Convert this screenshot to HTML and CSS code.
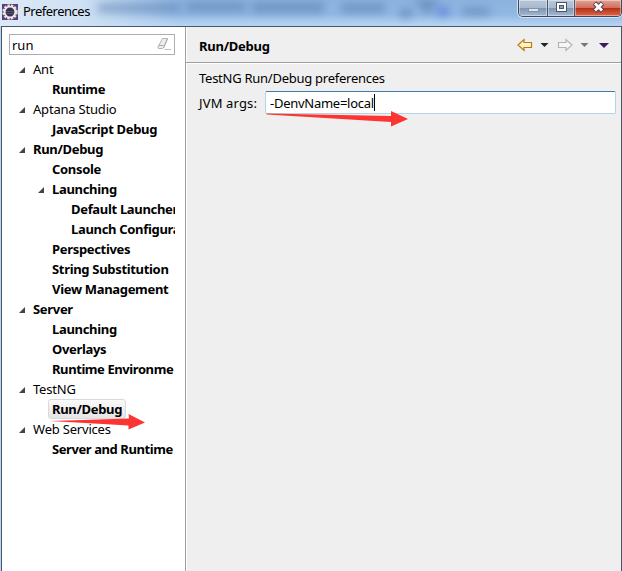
FILE: index.html
```html
<!DOCTYPE html>
<html lang="en">
<head>
<meta charset="utf-8">
<title>Preferences</title>
<link rel="stylesheet" href="styles.css">
</head>
<body>
<div class="window">
  <header class="titlebar">
    <svg class="backdrop" width="622" height="26" viewBox="0 0 622 26" aria-hidden="true">
      <g class="haze">
        <rect x="98" y="4" width="82" height="8"/>
        <rect x="186" y="3" width="60" height="8"/>
        <rect x="252" y="3" width="72" height="9"/>
        <rect x="341" y="4" width="44" height="8"/>
        <path d="M414 0h26l-13 15z"/>
        <rect x="400" y="9" width="12" height="9"/>
        <rect x="437" y="7" width="12" height="9" class="haze-blue"/>
        <rect x="462" y="8" width="28" height="7"/>
      </g>
    </svg>
    <svg class="app-icon" width="16" height="16" viewBox="0 0 16 16">
      <rect width="16" height="16" fill="#58407c"/>
      <circle cx="8" cy="8" r="6.7" fill="none" stroke="#e6e1dc" stroke-width="2" stroke-dasharray="2.4 1.2"/>
      <circle cx="8" cy="8" r="5.4" fill="#37304f" stroke="#eeeae4" stroke-width="1.9"/>
      <path d="M4 7.5h8M4.2 9.5h7.6" stroke="#5b5276"/>
    </svg>
    <h1 class="title">Preferences</h1>
    <div class="controls">
      <span class="control min"><svg width="28" height="15"><rect x="9.500" y="8.500" width="10" height="3" fill="#dce5ef" stroke="#8792a5"/></svg></span>
      <span class="control max"><svg width="26" height="15"><rect x="8.500" y="2.500" width="10" height="9" fill="#fff" stroke="#4c566b"/><rect x="11.500" y="5.500" width="4" height="3" fill="#8aa0bd" stroke="#4c566b"/></svg></span>
      <span class="control close"><svg width="46" height="15"><path d="M19.500 3L27.500 11M27.500 3L19.500 11" stroke="#5a3c4b" stroke-width="4.800"/><path d="M20 3.500L27 10.500M27 3.500L20 10.500" stroke="#fff" stroke-width="2.900"/></svg></span>
    </div>
  </header>
  <div class="content">
    <aside class="sidebar">
      <div class="filter">
        <span class="filter-text">run</span>
        <svg width="15" height="15" viewBox="0 0 15 15"><path d="M5.500 1.500h5l-4 9q-.5 1-1.500 1H2q-1.500 0-1-1.500z" fill="#eee" stroke="#b5b5b5"/><path d="M1.500 8.500h5M10.500 2l-4 9" stroke="#aaa" fill="none"/><path d="M7 12.500h7" stroke="#c5c5c5"/></svg>
      </div>
      <ul class="tree">
        <li class="row branch"><span class="label">Ant</span></li>
        <li class="row level-1 bold"><span class="label">Runtime</span></li>
        <li class="row branch"><span class="label">Aptana Studio</span></li>
        <li class="row level-1 bold"><span class="label">JavaScript Debug</span></li>
        <li class="row branch bold"><span class="label">Run/Debug</span></li>
        <li class="row level-1 bold"><span class="label">Console</span></li>
        <li class="row branch level-1 bold"><span class="label">Launching</span></li>
        <li class="row level-2 bold"><span class="label">Default Launcher</span></li>
        <li class="row level-2 bold"><span class="label">Launch Configurations</span></li>
        <li class="row level-1 bold"><span class="label">Perspectives</span></li>
        <li class="row level-1 bold"><span class="label">String Substitution</span></li>
        <li class="row level-1 bold"><span class="label">View Management</span></li>
        <li class="row branch bold"><span class="label">Server</span></li>
        <li class="row level-1 bold"><span class="label">Launching</span></li>
        <li class="row level-1 bold"><span class="label">Overlays</span></li>
        <li class="row level-1 bold tight"><span class="label">Runtime Environme</span></li>
        <li class="row branch"><span class="label">TestNG</span></li>
        <li class="row level-1 bold selected"><span class="label">Run/Debug</span></li>
        <li class="row branch"><span class="label">Web Services</span></li>
        <li class="row level-1 bold tight"><span class="label">Server and Runtime</span></li>
      </ul>
      <svg class="arrow tree-arrow" width="95" height="16" viewBox="0 0 95 16"><path d="M0 7L79 4.500L78.500 0L95 8.500L78.500 15.500V11.500z"/></svg>
    </aside>
    <main class="page">
      <div class="page-head">
        <h2 class="page-title">Run/Debug</h2>
        <svg class="nav" width="96" height="16" viewBox="0 0 96 16">
          <defs><linearGradient id="gold" x2="0" y2="1"><stop stop-color="#fffef0"/><stop offset="1" stop-color="#ffe79c"/></linearGradient></defs>
          <path d="M1 8L7 2.500V5.500H14.500V10.500H7V13.500z" fill="url(#gold)" stroke="#b77a16" stroke-width="1.200"/>
          <path d="M23.500 6h8l-4 4z" fill="#222"/>
          <path d="M55 8L49 2.500V5.500H41.500V10.500H49V13.500z" fill="#f6f6f6" stroke="#b4b4b4" stroke-width="1.200"/>
          <path d="M63.500 6h8l-4 4z" fill="#777"/>
          <path d="M82 6h10l-5 5z" fill="#3a1c66"/>
        </svg>
      </div>
      <div class="page-body">
        <p class="description">TestNG Run/Debug preferences</p>
        <div class="field">
          <span class="field-label">JVM args:</span>
          <div class="input"><span class="value">-DenvName=local</span><i class="caret"></i></div>
        </div>
        <svg class="arrow field-arrow" width="142" height="16" viewBox="0 0 142 16"><path d="M0 2.500L125 5V0L142 8L125 15.500V11L1 3.500z"/></svg>
      </div>
    </main>
  </div>
</div>
</body>
</html>
```
FILE: styles.css
```css
* { box-sizing: border-box; }
body {
  margin: 0;
  overflow: hidden;
  font: 13px/20px "Noto Sans", "Open Sans", sans-serif;
  color: #000;
}
h1, h2, p, ul { margin: 0; padding: 0; font-size: inherit; font-weight: normal; }
svg { display: block; flex: none; }
.window { width: 622px; height: 571px; display: flex; flex-direction: column; background: #bcd5ef; }
.titlebar {
  position: relative;
  height: 26px;
  flex: none;
  display: flex;
  align-items: flex-start;
  overflow: hidden;
  background: linear-gradient(90deg, #dce9f7 0, #cfe1f4 80px, rgba(190,215,241,0) 180px),
    linear-gradient(#8cb2de, #91b7e3 55%, #a8c9ec 80%, #b9d5f1);
}
.backdrop { position: absolute; left: 0; top: 0; }
.haze { fill: #41689b; opacity: .45; filter: blur(4.5px); }
.haze-blue { fill: #3158d8; }
.app-icon { position: relative; margin: 4px 0 0 2px; }
.title { position: relative; margin: 1px 0 0 5px; letter-spacing: -.5px; }
.controls {
  position: relative;
  display: flex;
  margin-left: auto;
  height: 17px;
  border: 1px solid #3d4861;
  border-top: 0;
  border-radius: 0 0 5px 5px;
  overflow: hidden;
  box-shadow: 0 0 0 1px #d2e3f5;
}
.control {
  border-right: 1px solid #4b5870;
  background: linear-gradient(#b9c7d9 0, #a7b8cf 50%, #7f94b0 51%, #a4b9d3 100%);
  box-shadow: inset 0 0 0 1px rgba(255,255,255,.4);
}
.min { width: 29px; }
.max { width: 27px; }
.close { width: 46px; border: 0; background: linear-gradient(#e3a394 0, #cf6e5b 50%, #b92d17 51%, #d96a49 100%); }
.content {
  flex: 1;
  display: flex;
  min-height: 0;
  margin-left: 1px;
  border: solid #46566f;
  border-width: 1px 1px 0;
}
.sidebar { position: relative; width: 183px; padding: 7px 0 0 7px; background: #fff; flex: none; }
.filter {
  width: 166px;
  height: 21px;
  border: 1px solid #abadb3;
  padding: 0 2px;
  display: flex;
  align-items: center;
  justify-content: space-between;
}
.tree { list-style: none; width: 166px; margin-top: 4px; overflow: hidden; }
.row { height: 20px; display: flex; align-items: center; padding-left: 24px; white-space: nowrap; letter-spacing: -.2px; }
.branch { padding-left: 10px; }
.branch::before {
  content: "";
  width: 6px;
  height: 6px;
  margin: 2px 8px 0 0;
  flex: none;
  background: #444;
  clip-path: polygon(100% 0, 100% 100%, 0 100%);
}
.level-1 { padding-left: 43px; }
.branch.level-1 { padding-left: 29px; }
.level-2 { padding-left: 62px; }
.bold { font-weight: bold; letter-spacing: -.32px; }
.tight { letter-spacing: -.42px; }
.selected { padding-left: 39px; }
.selected .label {
  height: 20px;
  line-height: 18px;
  padding: 0 3px;
  border: 1px solid #d9d9d9;
  border-radius: 3px;
  background: linear-gradient(#fafafa, #e5e5e5);
}
.arrow { position: absolute; fill: #fc3532; }
.tree-arrow { left: 48px; top: 387px; }
.page { flex: 1; min-width: 0; display: flex; flex-direction: column; border-left: 1px solid #a0a0a0; background: #efefef; box-shadow: inset 1px 0 #fff; }
.page-head {
  height: 36px;
  display: flex;
  align-items: center;
  padding: 1px 8px 0 13px;
  border-bottom: 1px solid #a0a0a0;
}
.page-title { position: relative; top: 1px; font-weight: bold; letter-spacing: -.25px; }
.nav { margin-left: auto; }
.page-body { position: relative; padding: 4px 5px 0 13px; border-top: 1px solid #fff; }
.description { letter-spacing: -.26px; }
.field { display: flex; align-items: center; margin-top: 3px; }
.field-label { width: 66px; letter-spacing: .15px; }
.input {
  flex: 1;
  height: 23px;
  display: flex;
  align-items: center;
  padding-left: 4px;
  border: 1px solid #b5d3e7;
  border-top-color: #3d7bad;
  border-radius: 2px;
  background: #fff;
}
.value { letter-spacing: -.27px; }
.caret { width: 1px; height: 17px; background: #000; }
.field-arrow { left: 80px; top: 47px; }
```
